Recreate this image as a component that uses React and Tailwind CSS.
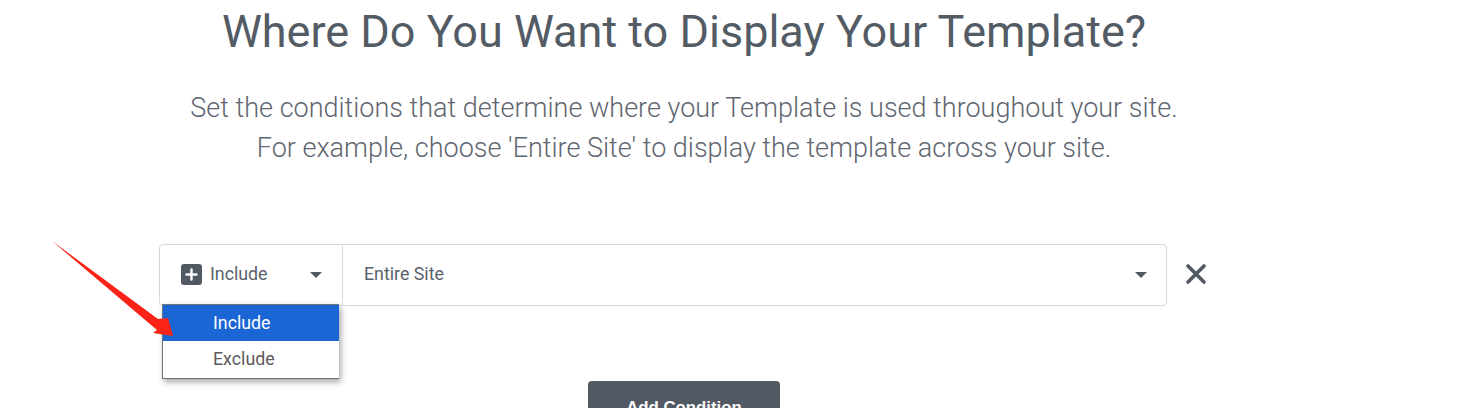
export default function App() {
  return (
    <div className="relative w-[1458px] h-[408px] overflow-hidden bg-white font-['Roboto',sans-serif]">
      <div className="w-[1368px] flex flex-col items-center">
        <h1 className="mt-[4px] h-[56px] text-[45px] leading-[56px] font-normal text-[#535b65] whitespace-nowrap">Where Do You Want to Display Your Template?</h1>
        <p className="mt-[28px] text-[27px] leading-[40px] font-light text-[#5f6670] text-center whitespace-nowrap">
          Set the conditions that determine where your Template is used throughout your site.<br />
          For example, choose 'Entire Site' to display the template across your site.
        </p>
      </div>
      <div className="mt-[76px] ml-[159px] flex items-center">
        <div className="relative w-[1008px] h-[62px] flex rounded border border-[#d5d8dc] bg-white text-[#5a626b] text-[17.8px]">
          <div className="w-[183px] flex items-center border-r border-[#d5d8dc] pl-[21px] pr-[20px] pb-[2px]">
            <span className="w-[21px] h-[21px] rounded-[3px] bg-[#515962] flex items-center justify-center">
              <svg width="13" height="13" viewBox="0 0 13 13" fill="none" stroke="#fff" strokeWidth="2.4" strokeLinecap="round"><path d="M6.5 1.5v10M1.5 6.5h10" /></svg>
            </span>
            <span className="ml-[8px]">Include</span>
            <svg className="ml-auto mt-[2px]" width="12" height="6" viewBox="0 0 12 6" fill="#515962"><path d="M0 0h12L6 6z" /></svg>
          </div>
          <div className="flex-1 flex items-center pl-[21px] pr-[19px] pb-[2px]">
            <span>Entire Site</span>
            <svg className="ml-auto mt-[2px]" width="12" height="6" viewBox="0 0 12 6" fill="#515962"><path d="M0 0h12L6 6z" /></svg>
          </div>
          <div className="absolute left-[2px] top-[59px] w-[177px] border-l border-t border-b border-[#6f7378] bg-white shadow-[2px_3px_6px_rgba(0,0,0,0.35)] z-10 text-[17.8px]">
            <div className="h-[36px] flex items-center pl-[50px] bg-[#1a66d4] text-white">Include</div>
            <div className="h-[37px] flex items-center pl-[50px] text-[#5d5a5c]">Exclude</div>
          </div>
        </div>
        <svg className="ml-[17px] -mt-[2px]" width="24" height="24" viewBox="0 0 24 24" fill="none" stroke="#515962" strokeWidth="3.6" strokeLinecap="round"><path d="M4 4l16 16M20 4L4 20" /></svg>
      </div>
      <div className="mt-[75px] ml-[588px] w-[192px] h-[60px] rounded bg-[#515962] text-white text-[16.8px] leading-[24px] font-bold font-['Liberation_Sans',sans-serif] flex items-start justify-center pt-[15px]">Add Condition</div>
      <svg className="absolute left-0 top-0 z-20 pointer-events-none" width="400" height="408" viewBox="0 0 400 408">
        <path d="M52 241L158 319L168 318L173 336L153 333L157 330Z" fill="#fb2317" />
      </svg>
    </div>
  );
}
